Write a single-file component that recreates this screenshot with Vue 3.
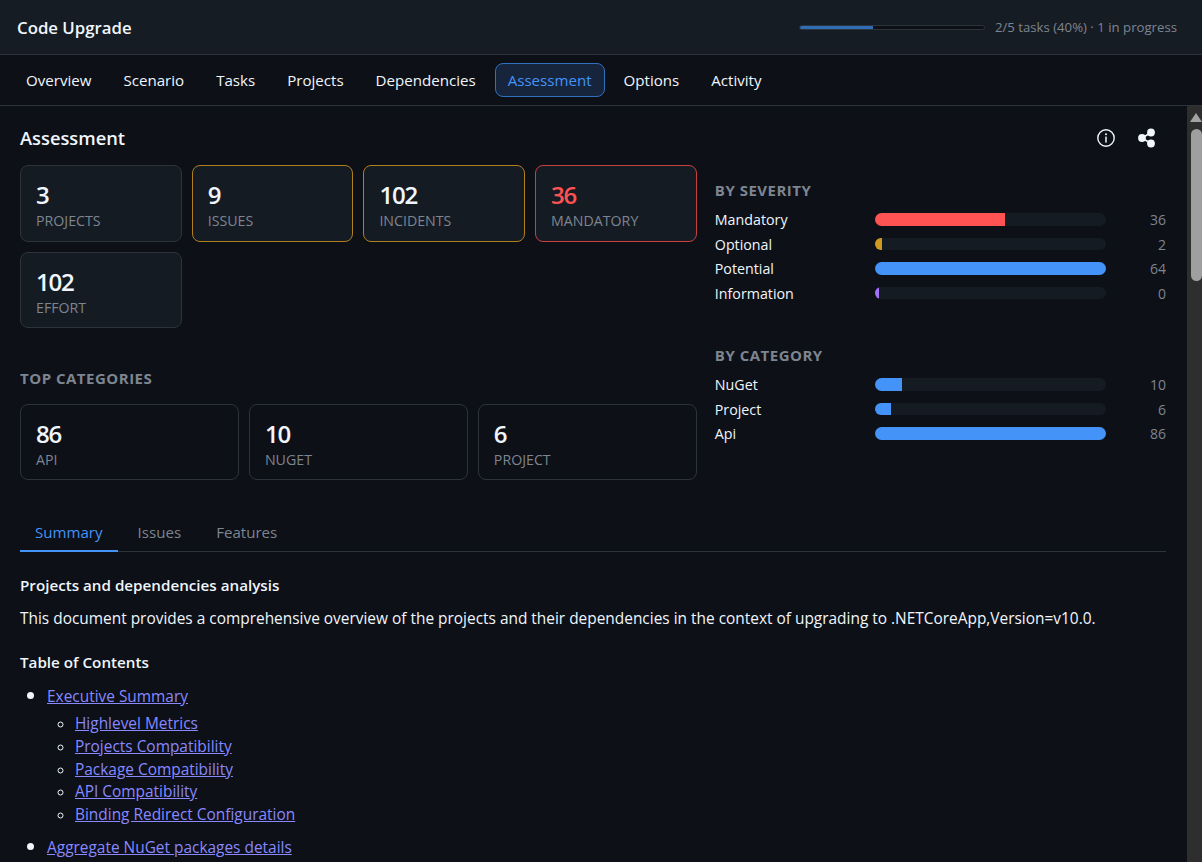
<script setup>
const navItems = ["Overview", "Scenario", "Tasks", "Projects", "Dependencies", "Assessment", "Options", "Activity"];

const topStats = [
  { value: 3, label: "Projects", tone: "" },
  { value: 9, label: "Issues", tone: "warn" },
  { value: 102, label: "Incidents", tone: "warn" },
  { value: 36, label: "Mandatory", tone: "danger" },
  { value: 102, label: "Effort", tone: "" },
];

const categories = [
  { value: 86, label: "Api" },
  { value: 10, label: "NuGet" },
  { value: 6, label: "Project" },
];

const severity = [
  { name: "Mandatory", count: 36, color: "#ff5252" },
  { name: "Optional", count: 2, color: "#d29922" },
  { name: "Potential", count: 64, color: "#4493f8" },
  { name: "Information", count: 0, color: "#a371f7" },
];

const byCategory = [
  { name: "NuGet", count: 10, color: "#4493f8" },
  { name: "Project", count: 6, color: "#4493f8" },
  { name: "Api", count: 86, color: "#4493f8" },
];

const pct = (count, list) => {
  const max = Math.max(...list.map((r) => r.count));
  return (count / max) * 100 + "%";
};

const subLinks = [
  "Highlevel Metrics",
  "Projects Compatibility",
  "Package Compatibility",
  "API Compatibility",
  "Binding Redirect Configuration",
];
</script>

<template>
  <div class="app">
    <header class="topbar">
      <div class="title">Code Upgrade</div>
      <div class="progress">
        <div class="progress-track"><div class="progress-fill"></div></div>
        <span class="progress-text">2/5 tasks (40%) · 1 in progress</span>
      </div>
    </header>

    <nav class="nav">
      <a v-for="item in navItems" :key="item" class="nav-item" :class="{ active: item === 'Assessment' }">{{ item }}</a>
    </nav>

    <main class="main">
      <div class="content">
        <div class="page-head">
          <h1>Assessment</h1>
          <div class="page-actions">
            <svg width="20" height="20" viewBox="0 0 20 20" fill="none">
              <circle cx="10" cy="10" r="8.2" stroke="#f0f6fc" stroke-width="1.4" />
              <circle cx="10" cy="6.2" r="1" fill="#f0f6fc" />
              <rect x="9.25" y="8.6" width="1.5" height="6" fill="#f0f6fc" />
            </svg>
            <svg width="20" height="20" viewBox="0 0 20 20">
              <path d="M14 4.5 5 10l9 5.5" stroke="#f0f6fc" stroke-width="1.6" fill="none" />
              <circle cx="14" cy="4.5" r="3.9" fill="#f0f6fc" />
              <circle cx="5" cy="10" r="3.9" fill="#f0f6fc" />
              <circle cx="14" cy="15.5" r="3.9" fill="#f0f6fc" />
            </svg>
          </div>
        </div>

        <div class="overview">
          <div class="overview-left">
            <div class="stat-grid four">
              <div v-for="s in topStats" :key="s.label" class="stat" :class="s.tone">
                <div class="stat-value">{{ s.value }}</div>
                <div class="stat-label">{{ s.label }}</div>
              </div>
            </div>

            <h2 class="section-title top-cat">Top categories</h2>
            <div class="stat-grid three">
              <div v-for="c in categories" :key="c.label" class="stat plain">
                <div class="stat-value">{{ c.value }}</div>
                <div class="stat-label">{{ c.label }}</div>
              </div>
            </div>
          </div>

          <div class="overview-right">
            <h2 class="section-title">By severity</h2>
            <div class="bars">
              <div v-for="r in severity" :key="r.name" class="bar-row">
                <span class="bar-name">{{ r.name }}</span>
                <div class="bar-track">
                  <div class="bar-fill" :style="{ width: pct(r.count, severity), background: r.color }"></div>
                </div>
                <span class="bar-count">{{ r.count }}</span>
              </div>
            </div>

            <h2 class="section-title by-cat">By category</h2>
            <div class="bars">
              <div v-for="r in byCategory" :key="r.name" class="bar-row">
                <span class="bar-name">{{ r.name }}</span>
                <div class="bar-track">
                  <div class="bar-fill" :style="{ width: pct(r.count, byCategory), background: r.color }"></div>
                </div>
                <span class="bar-count">{{ r.count }}</span>
              </div>
            </div>
          </div>
        </div>

        <div class="tabs">
          <a class="tab active">Summary</a>
          <a class="tab">Issues</a>
          <a class="tab">Features</a>
        </div>

        <article class="doc">
          <h3>Projects and dependencies analysis</h3>
          <p>This document provides a comprehensive overview of the projects and their dependencies in the context of upgrading to .NETCoreApp,Version=v10.0.</p>
          <h3 class="toc-head">Table of Contents</h3>
          <ul class="toc">
            <li>
              <a href="#">Executive Summary</a>
              <ul>
                <li v-for="l in subLinks" :key="l"><a href="#">{{ l }}</a></li>
              </ul>
            </li>
            <li><a href="#">Aggregate NuGet packages details</a></li>
          </ul>
        </article>
      </div>

      <div class="scrollbar">
        <svg class="scroll-arrow" width="12" height="9" viewBox="0 0 12 9"><path d="M6 0 12 9H0z" fill="#a3a3a3" /></svg>
        <div class="scroll-thumb"></div>
      </div>
    </main>
  </div>
</template>

<style>
html,
body {
  margin: 0;
  background: #0d1017;
}
</style>

<style scoped>
.app {
  height: 862px;
  display: flex;
  flex-direction: column;
  overflow: hidden;
  background: #0d1017;
  color: #f0f6fc;
  font-family: "Open Sans", "Noto Sans", "Liberation Sans", sans-serif;
  font-size: 14px;
}

.topbar {
  flex: none;
  height: 54px;
  display: flex;
  align-items: center;
  justify-content: space-between;
  padding: 0 25px 0 17px;
  background: #161c24;
  border-bottom: 1px solid #2d333b;
}

.title {
  font-size: 16.8px;
  font-weight: 600;
}

.progress {
  display: flex;
  align-items: center;
  gap: 10px;
}

.progress-track {
  width: 186px;
  height: 5px;
  border-radius: 3px;
  background: #0d1017;
  border: 1px solid #2d333b;
  box-sizing: border-box;
  overflow: hidden;
}

.progress-fill {
  width: 40%;
  height: 100%;
  background: #2f6db5;
}

.progress-text {
  font-size: 13.2px;
  color: #7d8590;
}

.nav {
  flex: none;
  height: 50px;
  display: flex;
  align-items: center;
  gap: 6px;
  padding: 0 13px;
  border-bottom: 1px solid #2d333b;
  background: #0d1017;
}

.nav-item {
  padding: 6px 12px;
  border: 1px solid transparent;
  border-radius: 8px;
  font-size: 15.1px;
  line-height: 20px;
}

.nav-item.active {
  color: #4493f8;
  background: #17253c;
  border-color: #2f6fc0;
}

.main {
  flex: 1;
  min-height: 0;
  display: flex;
}

.content {
  flex: 1;
  min-width: 0;
  overflow: hidden;
  box-sizing: border-box;
  padding: 20px 21px 0 20px;
}

.scrollbar {
  flex: none;
  width: 15px;
  box-sizing: border-box;
  padding: 7px 0 0 3px;
  background: #2e2e2e;
}

.scroll-arrow {
  display: block;
}

.scroll-thumb {
  width: 11px;
  height: 152px;
  margin: 7px 0 0 1px;
  border-radius: 6px;
  background: #9f9f9f;
}

.page-head {
  display: flex;
  align-items: center;
  justify-content: space-between;
  height: 24px;
  margin-bottom: 15px;
}

h1 {
  margin: -2px 0 0;
  font-size: 18.3px;
  font-weight: 600;
}

.page-actions {
  display: flex;
  align-items: center;
  gap: 21px;
  padding-right: 9px;
}

.overview {
  display: grid;
  grid-template-columns: 3fr 2fr;
  gap: 18px;
}

.stat-grid {
  display: grid;
  gap: 10px;
}

.stat-grid.four {
  grid-template-columns: repeat(4, 1fr);
}

.stat-grid.three {
  grid-template-columns: repeat(3, 1fr);
}

.stat {
  box-sizing: border-box;
  height: 76.5px;
  padding: 13px 15px;
  background: #151b23;
  border: 1px solid #2d333b;
  border-radius: 8px;
}

.stat.plain {
  height: 76px;
  background: #0d1017;
}

.stat.warn {
  border-color: #b07f1e;
}

.stat.danger {
  border-color: #c9403f;
}

.stat.danger .stat-value {
  color: #ff5252;
}

.stat-value {
  font-size: 24px;
  font-weight: 600;
  line-height: 32px;
  letter-spacing: -1.2px;
}

.stat-label {
  font-size: 14.2px;
  line-height: 20px;
  color: #7d8590;
  text-transform: uppercase;
}

.section-title {
  margin: 0;
  font-size: 15px;
  line-height: 20px;
  font-weight: 700;
  color: #7d8590;
  text-transform: uppercase;
  letter-spacing: 0.5px;
}

.top-cat {
  margin: 40px 0 16px;
}

.by-cat {
  margin-top: 39.5px;
}

.overview-right {
  padding-top: 15px;
}

.bars {
  display: flex;
  flex-direction: column;
  margin-top: 7.4px;
}

.bar-row {
  display: grid;
  grid-template-columns: 160px 1fr 60px;
  align-items: center;
  height: 24.5px;
}

.bar-name {
  font-size: 14.25px;
}

.bar-track {
  height: 12.5px;
  border-radius: 7px;
  background: #151b23;
  overflow: hidden;
}

.bar-fill {
  height: 100%;
  min-width: 4px;
}

.bar-count {
  text-align: right;
  color: #7d8590;
  font-size: 14px;
}

.tabs {
  display: flex;
  gap: 5px;
  margin-top: 35.5px;
  height: 35px;
  border-bottom: 1px solid #2d333b;
}

.tab {
  padding: 0 15px;
  height: 36px;
  box-sizing: border-box;
  line-height: 33px;
  font-size: 15.1px;
  color: #7d8590;
}

.tab.active {
  color: #4493f8;
  border-bottom: 2px solid #4493f8;
}

.doc {
  font-size: 15.43px;
  line-height: 22.8px;
}

.doc h3 {
  margin: 22px 0 0;
  font-size: 15.2px;
  line-height: 23px;
  font-weight: 600;
}

.doc p {
  margin: 11px 0 0;
}

.doc .toc-head {
  margin-top: 21px;
}

.toc {
  margin: 10px 0 0;
  padding-left: 27px;
}

.toc > li + li {
  margin-top: 8px;
}

.toc > li::marker {
  font-size: 19px;
}

.toc ul {
  margin: 4px 0 0;
  padding-left: 28px;
}

.toc a {
  color: #8888ff;
}
</style>
